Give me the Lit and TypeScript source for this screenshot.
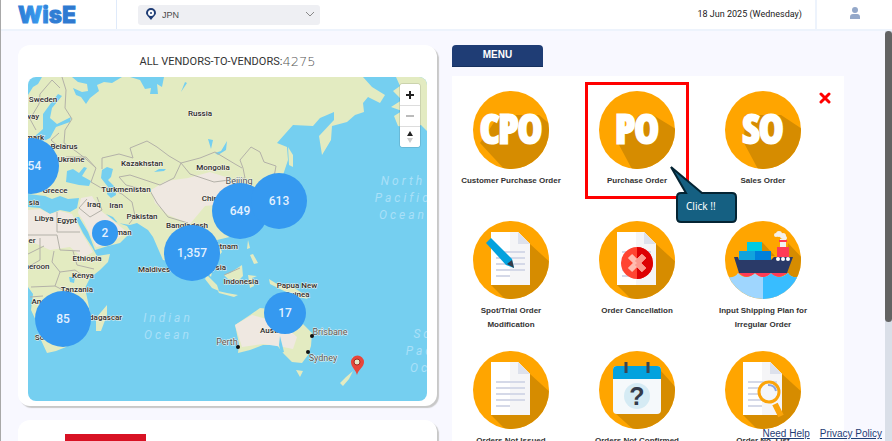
import { LitElement, html, svg, css } from "lit";
import { customElement, property } from "lit/decorators.js";

/* ---------- menu icons ---------- */

@customElement("menu-icon")
class MenuIcon extends LitElement {
  @property() kind = "";

  static styles = css`
    :host { display: block; width: 76px; height: 78px; }
    svg { display: block; width: 76px; height: 78px; }
    .word { font: 700 40px "Liberation Sans Narrow", "Open Sans Condensed", "Liberation Sans", sans-serif; fill: #fff; stroke: #fff; stroke-width: 3; text-anchor: middle; }
    .question { font: 700 25px "Liberation Sans", sans-serif; fill: #343b49; text-anchor: middle; }
  `;

  page() {
    return svg`
      <path d="M57 23 L80 44 V80 H34 L18 64Z" fill="#d68c00"/>
      <path d="M18 11H45L57 23V64H18Z" fill="#fff"/>
      <path d="M37 11H45L57 23V64H37Z" fill="#f5f5f7"/>
      <path d="M45 11L57 23H45Z" fill="#dde1ec"/>
      <path d="M23 31H52M23 37H52M23 43H52M23 49H52M23 55H37" stroke="#d5d9e8" stroke-width="2"/>`;
  }

  art() {
    switch (this.kind) {
      case "cpo":
        return svg`<path d="M7 52L33 80H80V36L66 24H26Z" fill="#d68c00"/><text class="word" x="38" y="52">CPO</text>`;
      case "po":
        return svg`<path d="M19 52L34 80H80V40L54 24H40Z" fill="#d68c00"/><text class="word" x="38" y="52">PO</text>`;
      case "so":
        return svg`<path d="M19 52L34 80H80V40L56 24H20Z" fill="#d68c00"/><text class="word" x="38" y="52">SO</text>`;
      case "edit":
        return svg`${this.page()}
          <path d="M13 22L18 17L39 38L41 47L33 44Z" fill="#03a2de"/>
          <path d="M34 43L39 39L41 47Z" fill="#343b49"/>`;
      case "cancel":
        return svg`${this.page()}
          <circle cx="38" cy="42" r="16" fill="#ff4431"/>
          <path d="M38 26A16 16 0 0 1 38 58Z" fill="#dd0003"/>
          <path d="M31 35L45 49M45 35L31 49" stroke="#ffbcb0" stroke-width="6"/>
          <path d="M38 42L45 49M45 35L38 42" stroke="#fb9a8e" stroke-width="6"/>`;
      case "ship":
        return svg`
          <path d="M37 21L50 35H37ZM63 22L80 40V58H60Z" fill="#d68c00"/>
          <path d="M0 55C4 57 10 57 13 52Q21 60 30 52Q38 60 46 52Q54 60 63 52C66 57 72 57 76 55V78H0Z" fill="#9fd6fe"/>
          <path d="M38 56Q43 56 46 52Q54 60 63 52C66 57 72 57 76 55V78H38Z" fill="#38bdff"/>
          <path d="M13 51H63Q54 60 46 52Q38 60 30 52Q21 60 13 51Z" fill="#ff3b56"/>
          <path d="M22 21H37V30H22Z" fill="#00cbe0"/><path d="M14 30H30V40H14Z" fill="#12a3dd"/><path d="M30 30H46V40H30Z" fill="#0080db"/>
          <path d="M52 26H64V37H52Z" fill="#ff3b56"/><path d="M55 18H61V26H55Z" fill="#f2f2f2"/><path d="M54 19H62V21H54Z" fill="#ff3b56"/>
          <path d="M9 36H13L14 39H46L49 36H68L62 52H14Z" fill="#2a3a68"/>
          <g fill="#fff"><circle cx="53" cy="38" r="2"/><circle cx="58" cy="38" r="2"/><circle cx="63" cy="38" r="2"/></g>
          <g fill="#f4f0ea"><circle cx="51" cy="14" r="2"/><circle cx="54" cy="13" r="3"/><circle cx="58" cy="15" r="3"/><circle cx="60" cy="17" r="2"/></g>`;
      case "document":
        return this.page();
      case "calendar":
        return svg`
          <path d="M62 20L80 40V80H36L16 62Z" fill="#d68c00"/>
          <rect x="14" y="15" width="48" height="48" rx="4" fill="#f5f9fb"/>
          <path d="M14 28V19A4 4 0 0 1 18 15H58A4 4 0 0 1 62 19V28Z" fill="#03a2de"/>
          <path d="M27 11V22M49 11V22" stroke="#3c4450" stroke-width="3"/>
          <circle cx="38" cy="45" r="13" fill="#d5ebf4"/>
          <text class="question" x="38" y="54">?</text>`;
      default:
        return svg`${this.page()}
          <path d="M50 53L56 65" stroke="#fba40a" stroke-width="6"/>
          <circle cx="44" cy="41" r="10" fill="#f4f6fb" stroke="#fba40a" stroke-width="3"/>
          <path d="M43 34Q50 34 51 40" fill="none" stroke="#8ea5dd" stroke-width="2"/>`;
    }
  }

  render() {
    return html`<svg viewBox="0 0 76 78" aria-hidden="true">
      <defs><clipPath id="disc"><ellipse cx="38" cy="39" rx="38" ry="39"/></clipPath></defs>
      <g clip-path="url(#disc)"><rect width="76" height="78" fill="#ffa500"/>${this.art()}</g>
    </svg>`;
  }
}

/* ---------- vendor map ---------- */

const LABELS: [string, number, number][] = [
  ["Sweden", 43, 102], ["way", 32, 119], ["mark", 35, 140], ["Belarus", 64, 149],
  ["Ukraine", 71, 162], ["Greece", 55, 193], ["Russia", 200, 116], ["Kazakhstan", 142, 166],
  ["Mongolia", 213, 170], ["Turkmenistan", 126, 192], ["China", 212, 201], ["Iraq", 94, 207],
  ["Iran", 116, 208], ["Pakistan", 142, 219], ["Bangladesh", 187, 228], ["Libya", 44, 221],
  ["Egypt", 67, 223], ["sia", 34, 205], ["Oman", 121, 235], ["er", 32, 243],
  ["Ethiopia", 87, 261], ["Cameroon", 31, 269], ["Kenya", 83, 278], ["Tanzania", 77, 292],
  ["Angola", 44, 304], ["Madagascar", 100, 320], ["Maldives", 154, 272], ["Vietnam", 223, 249],
  ["Malaysia", 210, 270], ["Indonesia", 241, 284], ["Papua New", 297, 288], ["Guinea", 297, 297],
  ["Australia", 276, 333], ["South Africa", 57, 340],
];

const CITIES: [string, number, number][] = [
  ["Beijing", 239, 184], ["Brisbane", 330, 335], ["Sydney", 323, 361], ["Perth", 227, 345],
];

const OCEANS: [string, number, number][] = [
  ["North", 403, 185], ["Pacific", 403, 202], ["Ocean", 403, 219],
  ["Indian", 168, 322], ["Ocean", 168, 339],
  ["South", 436, 338], ["Pacific", 434, 355], ["Ocean", 434, 372],
];

const CLUSTERS: [string, number, number, number][] = [
  ["554", 31, 166, 28], ["649", 240, 211, 28], ["613", 279, 201, 28], ["2", 105, 233, 13],
  ["1,357", 192, 253, 28], ["85", 63, 319, 28], ["17", 285, 313, 21],
];

@customElement("vendor-map")
class VendorMap extends LitElement {
  static styles = css`
    :host { display: block; position: relative; height: 324px; border-radius: 8px; overflow: hidden; background: #75cff0; }
    .map { display: block; width: 100%; height: 100%; }
    .land { fill: #e3ebc1; }
    .dry { fill: #efe8e1; }
    .water { fill: #75cff0; }
    .border { fill: none; stroke: #b3b1a8; stroke-width: 1; }
    text { font-family: Roboto, "Liberation Sans", sans-serif; text-anchor: middle; }
    .country { font-size: 8px; font-weight: 500; fill: #2d2d2d; stroke: #f6f4ea; stroke-width: 1; paint-order: stroke; }
    .city { font-size: 9px; fill: #545454; stroke: #eef4f0; stroke-width: 1; paint-order: stroke; }
    .ocean { font-size: 12px; font-style: italic; letter-spacing: 3px; fill: #a9e0f8; }
    .cluster { fill: #3599f0; }
    .count { font-size: 12px; font-weight: 500; fill: #e4f1ff; }
    .controls { position: absolute; top: 7px; right: 7px; width: 20px; display: grid; border-radius: 3px; overflow: hidden; background: #fff; box-shadow: 0 0 0 1px #0000001a; }
    .controls button { border: 0; border-top: 1px solid #ddd; padding: 0; height: 21px; background: #fff; display: grid; place-items: center; }
    .controls button:first-child { border-top: 0; }
    .controls svg { display: block; width: 10px; height: 14px; }
  `;

  render() {
    return html`
      <svg class="map" viewBox="28 77 399 324" preserveAspectRatio="xMidYMid slice" role="img" aria-label="Vendor map">
        <path class="land" d="M42 77L38 84L33 87L28 95V194L45 196L52 199L60 196L68 199L79 198L77 208L70 212L60 210L50 214L40 208L28 207V287L33 294L31 310L38 325L41 340L47 353L56 351L66 347L80 330L90 312L88 302L85 288L90 278L100 270L108 262L110 254L97 256L92 247L83 233L75 217L79 217L88 232L95 250L108 246L120 243L131 232L127 226L116 222L106 214L113 217L118 223L130 225L137 223L148 230L153 237L163 260L175 262L185 245L200 255L207 272L211 277L214 262L222 252L217 240L234 236L245 228L262 200L270 183L283 175L288 160L287 147L277 143L293 125L313 126L320 118L334 112L334 120L319 136L322 155L331 140L332 126L347 122L355 115L364 112L363 103L368 97L380 103L385 95L372 87L363 77Z"/>
        <path class="land" d="M396 77H427V131L421 125L410 128L398 126L394 116L402 111L391 107L402 100L393 91L400 86Z"/>
        <path class="land" d="M288 147L293 155L293 167L289 165ZM230 273L242 265L243 276L238 281L228 279L224 275ZM207 275L217 285L219 291L212 288L205 279ZM218 291L227 293L238 295L234 297L219 293ZM269 279L277 284L290 285L302 293L308 299L298 297L282 290L270 284ZM248 240L250 248L247 249ZM250 255L253 254L258 263L254 264ZM248 275L257 276L252 278L254 286L250 288ZM107 305L107 315L101 331L96 331L96 318ZM296 370L303 371L300 377ZM352 356L357 362L356 368ZM353 371L349 379L343 386L340 383L346 377Z"/>
        <path class="dry" d="M28 210L40 209L50 214L60 211L72 214L82 233L93 252L83 258L70 247L50 250L28 240Z"/>
        <path class="dry" d="M81 198L92 196L100 210L116 223L127 232L110 244L96 247L84 222L78 213Z"/>
        <path class="dry" d="M151 190L166 181L188 178L210 172L235 180L238 190L225 204L205 206L190 224L168 215L155 203Z"/>
        <path class="water" d="M72 77L78 82L87 84L88 91L82 92L73 88L76 95L81 97L86 104L90 98L99 91L97 85L104 82L112 83L122 77ZM130 77L140 80L145 89L151 88L150 94L158 94L157 84L162 87L164 77ZM58 94L62 96L52 108L50 118L57 124L71 117L70 122L56 127L50 138L40 143L34 137L43 129L43 114L51 103Z"/>
        <path class="water" d="M67 171L73 169L79 173L84 167L87 168L82 176L91 181L89 186L79 185L66 182ZM102 170L107 167L113 169L111 177L108 180L115 187L116 195L111 198L107 194L108 187L101 178ZM215 153L221 151L227 141L226 150L218 155ZM154 172L159 169L166 169L164 171ZM181 92L185 82L187 83ZM208 139L213 140L211 149ZM69 277L75 277L74 283L70 282Z"/>
        <path class="land" d="M235 325L250 315L260 308L270 309L273 318L285 323L295 310L302 323L312 333L311 346L308 355L302 363L292 362L283 353L277 345L263 345L250 350L238 353L239 344Z"/>
        <path class="dry" d="M235 325L252 315L270 320L287 328L297 337L293 349L283 347L263 344L242 347Z"/>
        <path class="water" d="M280 336L282 344L284 352L281 353L279 345Z"/>
        <path class="border" d="M62 77L66 90L65 108L72 119L65 130L64 143L77 152L86 159L96 168L91 182L103 189M59 133L51 140L61 149M36 130L30 119L39 104L40 94L52 80L60 88M96 168L86 157L66 157M102 169L102 158L119 154L133 158L130 148L147 141L157 147L169 156L181 163L174 178L160 185L145 180L130 175L119 177M181 163L200 158L215 152L235 164L242 168M181 163L190 174L214 182L245 178L243 168L240 160L251 147L260 152L264 162L276 166L274 177M149 189L157 203L168 217L188 223M119 177L126 185L146 190M106 187L122 194L132 202L135 216L129 224M87 199L79 208L90 217L102 210L97 197M57 212V232H80M28 235H57L60 250L80 251M40 238V260L28 267M28 254L44 246M54 251L52 262L60 272L75 270L86 278M60 272L55 286L31 287M55 286L65 291M73 251L77 265L94 269M30 297L43 296M224 275L240 268"/>

        ${LABELS.map(([t, x, y]) => svg`<text class="country" x=${x} y=${y}>${t}</text>`)}
        ${CITIES.map(([t, x, y]) => svg`<text class="city" x=${x} y=${y}>${t}</text>`)}
        ${OCEANS.map(([t, x, y]) => svg`<text class="ocean" x=${x} y=${y}>${t}</text>`)}
        <g fill="#111"><circle cx="312" cy="336" r="2"/><circle cx="308" cy="352" r="2"/><circle cx="238" cy="347" r="2"/></g>
        ${CLUSTERS.map(([t, x, y, r]) => svg`<circle class="cluster" cx=${x} cy=${y} r=${r}/><text class="count" x=${x} y=${y + 4}>${t}</text>`)}
        <path d="M357 375C356 370 351 367 351 362A6 6 0 0 1 364 362C364 367 358 370 357 375Z" fill="#e8453a"/>
        <circle cx="357" cy="362" r="3" fill="#e8e6c8" stroke="#9b2c20" stroke-width="1"/>
      </svg>
      <div class="controls">
        <button aria-label="Zoom in"><svg viewBox="0 0 10 14"><path d="M1 7H9M5 3V11" stroke="#222" stroke-width="2"/></svg></button>
        <button aria-label="Zoom out"><svg viewBox="0 0 10 14"><path d="M1 7H9" stroke="#bbb" stroke-width="2"/></svg></button>
        <button aria-label="Reset bearing"><svg viewBox="0 0 10 14"><path d="M2 6L5 1L8 6Z" fill="#222"/><path d="M2 8L5 13L8 8Z" fill="#ccc"/></svg></button>
      </div>`;
  }
}

/* ---------- page ---------- */

const MENU = [
  { kind: "cpo", label: "Customer Purchase Order" },
  { kind: "po", label: "Purchase Order", hint: "Click !!" },
  { kind: "so", label: "Sales Order" },
  { kind: "edit", label: "Spot/Trial Order Modification" },
  { kind: "cancel", label: "Order Cancellation" },
  { kind: "ship", label: "Input Shipping Plan for Irregular Order" },
  { kind: "document", label: "Orders Not Issued" },
  { kind: "calendar", label: "Orders Not Confirmed" },
  { kind: "search", label: "Order No. List" },
];

@customElement("app-root")
class AppRoot extends LitElement {
  static styles = css`
    :host { display: flex; flex-direction: column; height: 100vh; overflow: hidden; position: relative; box-sizing: border-box; border-left: 1px solid #a8a8a8; background: #f8f8ff; color: #333; font-family: "Liberation Sans", sans-serif; }
    *, *::before { box-sizing: border-box; }
    header { flex: none; display: flex; align-items: stretch; height: 31px; background: #fff; border-bottom: 2px solid #edf3fc; }
    .brand { width: 116px; padding-left: 16px; border-right: 1px solid #dfeafa; }
    .brand svg { display: block; width: 60px; height: 29px; }
    .brand text { font: 800 23px Inter, "Liberation Sans", sans-serif; }
    .country { position: relative; width: 182px; height: 20px; margin: 4px 0 0 21px; color: #555; }
    .country select { appearance: none; width: 100%; height: 100%; padding: 0 24px; border: 0; border-radius: 3px; background: #eeeff3; color: #4a4a4a; font: 9px "Liberation Sans", sans-serif; }
    .country svg { position: absolute; pointer-events: none; }
    .pin { left: 8px; top: 4px; width: 10px; height: 12px; }
    .chevron { right: 6px; top: 7px; width: 8px; height: 6px; }
    .date { margin-left: auto; padding-right: 13px; font: 400 9px/29px Roboto, "Liberation Sans", sans-serif; color: #222; border-right: 2px solid #edf3fc; }
    .user { width: 75px; padding: 0; border: 0; background: none; display: grid; place-items: center; }
    .user svg { width: 12px; height: 12px; display: block; margin-bottom: 4px; }

    main { flex: 1; min-height: 0; overflow: hidden; display: grid; grid-template-columns: 421fr 392fr; gap: 13px; padding: 14px 48px 0 17px; align-items: start; }
    .stack { display: grid; gap: 14px; min-width: 0; }
    .card { padding: 5px 10px; border-radius: 12px; background: #fff; box-shadow: 2px 2px 1px #c8c8c8; margin-right: 2px; }
    h1 { margin: 0 0 5px; display: flex; justify-content: center; align-items: center; height: 22px; font: 400 11px Roboto, "Liberation Sans", sans-serif; color: #333; }
    .total { font: 200 13px "DejaVu Sans", sans-serif; color: #555; }
    .card.next { height: 160px; padding: 14px 47px; }
    .strip { width: 81px; height: 40px; background: #d81224; }

    h2 { margin: 0 0 9px; width: 91px; height: 22px; line-height: 20px; border-radius: 4px 4px 0 0; background: #1f3d75; border-bottom: 1px solid #15305f; color: #fff; text-align: center; font-size: 10px; }
    .panel { position: relative; background: #fff; padding: 15px 22px 40px 0; display: grid; grid-template-columns: repeat(3, 1fr); grid-auto-rows: 130px; column-gap: 8px; }
    .tile { position: relative; display: flex; flex-direction: column; align-items: center; gap: 5px; padding: 0; border: 0; background: none; color: #333; font: 700 8px "Liberation Sans", sans-serif; }
    .label { max-width: 106px; line-height: 14px; }
    .tile.marked { z-index: 1; }
    .tile.marked::before { content: ""; position: absolute; top: -9px; left: calc(50% - 52px); width: 104px; height: 117px; border: 3px solid #f00; }
    .callout { position: absolute; left: calc(50% + 32px); top: 74px; width: 70px; height: 60px; }
    .callout text { font: 10px "Noto Sans", sans-serif; fill: #fff; }
    .close { position: absolute; top: 16px; right: 13px; width: 12px; height: 12px; padding: 0; border: 0; background: none; }
    .close svg { display: block; width: 12px; height: 12px; }

    footer { position: absolute; right: 10px; bottom: 0; z-index: 2; display: flex; gap: 10px; }
    footer a { font: 10px/14px "Liberation Sans", sans-serif; color: #1f3d75; text-decoration: underline; }
    .scroll { position: absolute; top: 31px; right: 0; bottom: 0; width: 7px; background: #dadfe8; }
    .thumb { height: 71%; border-radius: 4px; background: #636363; }
  `;

  render() {
    return html`
      <header>
        <div class="brand">
          <svg viewBox="0 0 60 29" role="img" aria-label="WisE">
            <defs><linearGradient id="ink"><stop offset="0" stop-color="#2b7bd4"/><stop offset=".4" stop-color="#3a9cf0"/><stop offset=".5" stop-color="#2f7fd6"/><stop offset="1" stop-color="#2f78cf"/></linearGradient></defs>
            <text x="1" y="23" fill="url(#ink)" stroke="url(#ink)">WisE</text>
          </svg>
        </div>
        <div class="country">
          <select aria-label="Country"><option>JPN</option></select>
          <svg class="pin" viewBox="0 0 10 12"><path d="M5 12C3 9 0 7 0 5A5 5 0 0 1 10 5C10 7 7 9 5 12Z" fill="#1f3d75"/><circle cx="5" cy="5" r="3" fill="#fff"/><circle cx="5" cy="5" r="1" fill="#1f3d75"/></svg>
          <svg class="chevron" viewBox="0 0 8 6"><path d="M0 1L4 5L8 1" fill="none" stroke="#888"/></svg>
        </div>
        <div class="date">18 Jun 2025 (Wednesday)</div>
        <button class="user" aria-label="Account"><svg viewBox="0 0 12 12"><circle cx="6" cy="3" r="3" fill="#94a8c9"/><path d="M1 12V10Q1 7 4 7H8Q11 7 11 10V12Z" fill="#94a8c9"/></svg></button>
      </header>

      <main>
        <div class="stack">
          <section class="card">
            <h1>ALL VENDORS-TO-VENDORS:<span class="total">4275</span></h1>
            <vendor-map></vendor-map>
          </section>
          <section class="card next"><div class="strip"></div></section>
        </div>
        <section>
          <h2>MENU</h2>
          <div class="panel">
            ${MENU.map((m) => html`
              <button class="tile ${m.hint ? "marked" : ""}">
                <menu-icon kind=${m.kind}></menu-icon>
                <span class="label">${m.label}</span>
                ${m.hint ? html`<svg class="callout" viewBox="0 0 70 60">
                  <path d="M2 2L33 28H63Q67 28 67 32V53Q67 57 63 57H12Q8 57 8 53V32Q8 28 12 28H17Z" fill="#156082" stroke="#042433" stroke-width="2"/>
                  <text x="17" y="45">${m.hint}</text>
                </svg>` : ""}
              </button>`)}
            <button class="close" aria-label="Close"><svg viewBox="0 0 12 12"><path d="M2 2L10 10M10 2L2 10" stroke="#f00" stroke-width="3" stroke-linecap="round"/></svg></button>
          </div>
        </section>
      </main>
      <div class="scroll" aria-hidden="true"><div class="thumb"></div></div>
      <footer><a href="#help">Need Help</a><a href="#privacy">Privacy Policy</a></footer>`;
  }
}
